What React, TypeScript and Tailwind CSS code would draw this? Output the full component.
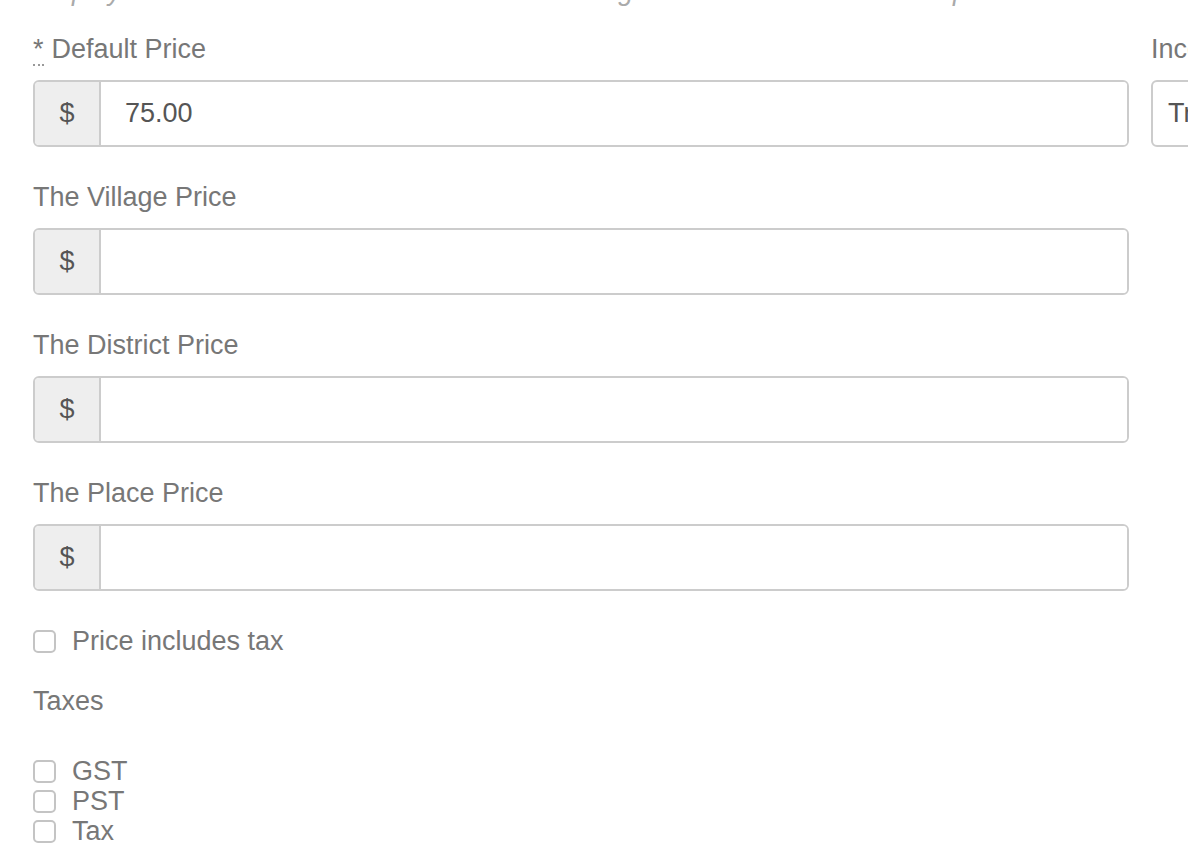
const font = { fontFamily: '"Liberation Sans", Arial, sans-serif' };

type PriceFieldProps = {
  label: string;
  value?: string;
  required?: boolean;
};

function PriceField({ label, value, required }: PriceFieldProps) {
  return (
    <div className="flex flex-col">
      <label className="text-[27px] leading-[36px] text-[#777]">
        {required && (
          <abbr
            title="required"
            className="mr-[8px] no-underline border-b-2 border-dotted border-[#999]"
          >
            *
          </abbr>
        )}
        {label}
      </label>
      <div className="mt-[13px] flex h-[67px] rounded-[6px] border-2 border-[#ccc] overflow-hidden">
        <span className="flex w-[66px] items-center justify-center bg-[#eee] border-r-2 border-[#ccc] text-[27px] text-[#555]">
          $
        </span>
        <input
          defaultValue={value}
          className="flex-1 px-[24px] text-[27px] text-[#555] outline-none bg-white"
          style={font}
        />
      </div>
    </div>
  );
}

function Check({ label }: { label: string }) {
  return (
    <label className="flex items-center h-[30px] text-[27px] text-[#777]">
      <span className="w-[23px] h-[23px] rounded-[5px] border-2 border-[#c4c4c4] bg-white" />
      <span className="ml-[16px]">{label}</span>
    </label>
  );
}

export default function App() {
  return (
    <div className="w-[1188px] h-[862px] overflow-hidden bg-white" style={font}>
      <div className="pl-[33px]">
        {/* help text, scrolled mostly out of view */}
        <p className="-mt-[25px] h-[32px] leading-[32px] text-[27px] italic text-[#aaa] whitespace-nowrap">
          Display the default ticket amount that will be charged at each location unless price is set below.
        </p>

        <div className="mt-[24px] flex gap-[22px]">
          {/* Left column */}
          <div className="w-[1096px] shrink-0 flex flex-col">
            <div className="flex flex-col gap-[32px]">
              <PriceField label="Default Price" value="75.00" required />
              <PriceField label="The Village Price" />
              <PriceField label="The District Price" />
              <PriceField label="The Place Price" />
            </div>

            <label className="mt-[32px] flex items-center h-[36px] text-[27px] text-[#777]">
              <span className="w-[23px] h-[23px] rounded-[5px] border-2 border-[#c4c4c4] bg-white" />
              <span className="ml-[16px]">Price includes tax</span>
            </label>

            <div className="mt-[24px] text-[27px] leading-[36px] text-[#777]">Taxes</div>

            <div className="mt-[37px] flex flex-col">
              <Check label="GST" />
              <Check label="PST" />
              <Check label="Tax" />
            </div>
          </div>

          {/* Right column (cut off) */}
          <div className="w-[400px] shrink-0 flex flex-col">
            <label className="text-[27px] leading-[36px] text-[#777] whitespace-nowrap">Income Account</label>
            <div className="mt-[13px] flex items-center h-[67px] rounded-[6px] border-2 border-[#ccc] px-[15px] text-[27px] text-[#555] whitespace-nowrap">
              Tracked Sales
            </div>
          </div>
        </div>
      </div>
    </div>
  );
}
